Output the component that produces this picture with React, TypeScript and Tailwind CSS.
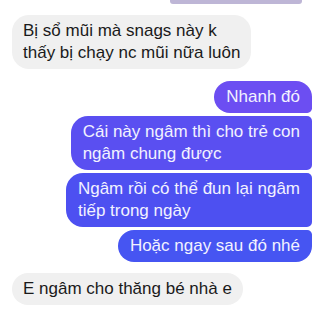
const font = { fontFamily: '"Liberation Sans", Arial, sans-serif' };

function Incoming({ lines }: { lines: string[] }) {
  return (
    <div className="flex justify-start pl-[12px]">
      <div className="rounded-[17px] bg-[#f0f0f0] px-[11px] py-[5px] text-[17px] leading-[22px] text-[#1a1a1a]">
        {lines.map((l, i) => (
          <div key={i} className="whitespace-nowrap">
            {l}
          </div>
        ))}
      </div>
    </div>
  );
}

function Outgoing({
  lines,
  color,
  corners,
}: {
  lines: string[];
  color: string;
  corners: string;
}) {
  return (
    <div className="flex justify-end pr-[8px]">
      <div
        className={`px-[12px] py-[5px] text-[17px] leading-[22px] text-[#f2f2ff] ${color} ${corners}`}
      >
        {lines.map((l, i) => (
          <div key={i} className="whitespace-nowrap">
            {l}
          </div>
        ))}
      </div>
    </div>
  );
}

export default function App() {
  return (
    <div className="h-[320px] w-[320px] overflow-hidden bg-white" style={font}>
      <div className="flex justify-end pr-[18px]">
        <div className="h-[4px] w-[132px] rounded-b-[3px] bg-[#beb6d6]" />
      </div>
      <div className="mt-[11px]">
        <Incoming lines={["Bị sổ mũi mà snags này k", "thấy bị chạy nc mũi nữa luôn"]} />
      </div>
      <div className="mt-[12px] flex flex-col gap-[3px]">
        <Outgoing
          lines={["Nhanh đó"]}
          color="bg-[#6c4ef2]"
          corners="rounded-[17px] rounded-br-[5px]"
        />
        <Outgoing
          lines={["Cái này ngâm thì cho trẻ con", "ngâm chung được"]}
          color="bg-[#5a4ff1]"
          corners="rounded-[17px] rounded-r-[5px]"
        />
        <Outgoing
          lines={["Ngâm rồi có thể đun lại ngâm", "tiếp trong ngày"]}
          color="bg-[#4d50f1]"
          corners="rounded-[17px] rounded-r-[5px]"
        />
        <Outgoing
          lines={["Hoặc ngay sau đó nhé"]}
          color="bg-[#4655f2]"
          corners="rounded-[17px] rounded-tr-[5px]"
        />
      </div>
      <div className="mt-[11px]">
        <Incoming lines={["E ngâm cho thăng bé nhà e"]} />
      </div>
    </div>
  );
}
